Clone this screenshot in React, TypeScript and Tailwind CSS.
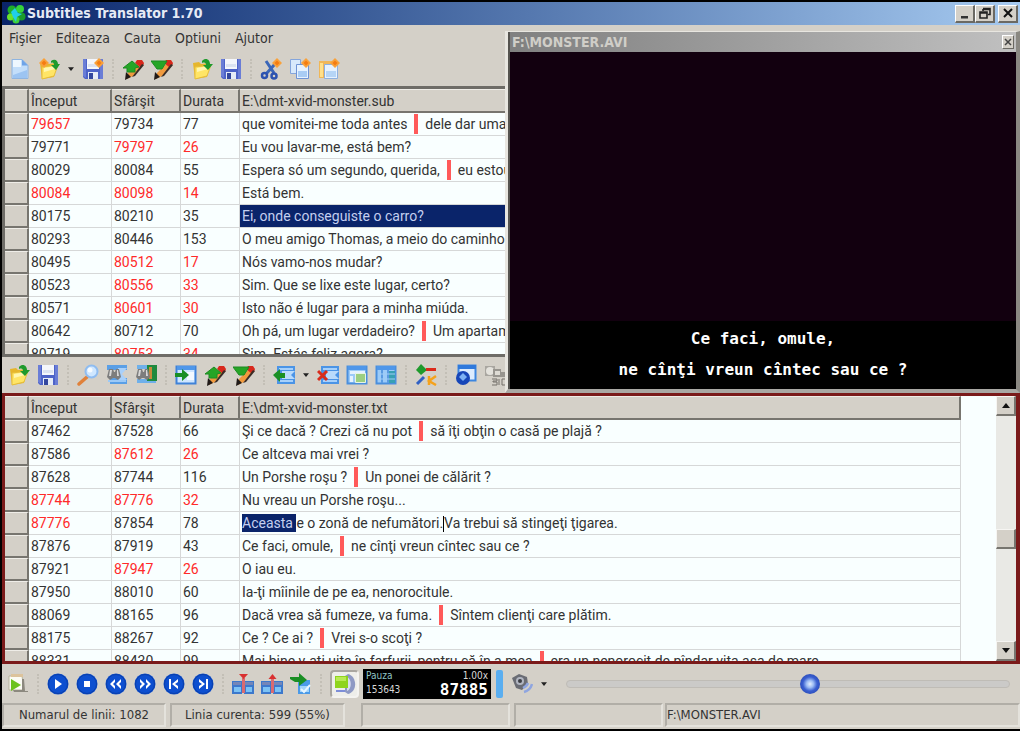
import { Fragment } from "react"
import type { ReactNode } from "react"
import clsx from "clsx"

interface Row {
  start: string
  end: string
  duration: string
  text: string[]
  redStart?: boolean
  redEnd?: boolean
  selected?: boolean
  editing?: boolean
}

const sourceRows: Row[] = [
  { start: "79657", end: "79734", duration: "77", text: ["que vomitei-me toda antes", "dele dar uma volta"], redStart: true },
  { start: "79771", end: "79797", duration: "26", text: ["Eu vou lavar-me, está bem?"], redEnd: true },
  { start: "80029", end: "80084", duration: "55", text: ["Espera só um segundo, querida,", "eu estou"] },
  { start: "80084", end: "80098", duration: "14", text: ["Está bem."], redStart: true, redEnd: true },
  { start: "80175", end: "80210", duration: "35", text: ["Ei, onde conseguiste o carro?"], selected: true },
  { start: "80293", end: "80446", duration: "153", text: ["O meu amigo Thomas, a meio do caminho", ""] },
  { start: "80495", end: "80512", duration: "17", text: ["Nós vamo-nos mudar?"], redEnd: true },
  { start: "80523", end: "80556", duration: "33", text: ["Sim. Que se lixe este lugar, certo?"], redEnd: true },
  { start: "80571", end: "80601", duration: "30", text: ["Isto não é lugar para a minha miúda."], redEnd: true },
  { start: "80642", end: "80712", duration: "70", text: ["Oh pá, um lugar verdadeiro?", "Um apartamento"] },
  { start: "80719", end: "80753", duration: "34", text: ["Sim. Estás feliz agora?"], redEnd: true },
]

const translatedRows: Row[] = [
  { start: "87462", end: "87528", duration: "66", text: ["Şi ce dacă ? Crezi că nu pot", "să îţi obţin o casă pe plajă ?"] },
  { start: "87586", end: "87612", duration: "26", text: ["Ce altceva mai vrei ?"], redEnd: true },
  { start: "87628", end: "87744", duration: "116", text: ["Un Porshe roşu ?", "Un ponei de călărit ?"] },
  { start: "87744", end: "87776", duration: "32", text: ["Nu vreau un Porshe roşu..."], redStart: true, redEnd: true },
  { start: "87776", end: "87854", duration: "78", text: ["Aceasta", "e o zonă de nefumători.", "Va trebui să stingeţi ţigarea."], redStart: true, editing: true },
  { start: "87876", end: "87919", duration: "43", text: ["Ce faci, omule,", "ne cînţi vreun cîntec sau ce ?"] },
  { start: "87921", end: "87947", duration: "26", text: ["O iau eu."], redEnd: true },
  { start: "87950", end: "88010", duration: "60", text: ["Ia-ţi mîinile de pe ea, nenorocitule."] },
  { start: "88069", end: "88165", duration: "96", text: ["Dacă vrea să fumeze, va fuma.", "Sîntem clienţi care plătim."] },
  { start: "88175", end: "88267", duration: "92", text: ["Ce ? Ce ai ?", "Vrei s-o scoţi ?"] },
  { start: "88331", end: "88430", duration: "99", text: ["Mai bine v-aţi uita în farfurii, pentru că în a mea", "era un nenorocit de pîndar vita asa de mare."] },
]

/* ---------- icons ---------- */

function Icon({ children }: { children: ReactNode }) {
  return (
    <svg viewBox="0 0 22 22" className="h-[22px] w-[22px] shrink-0" aria-hidden="true">
      {children}
    </svg>
  )
}

const Spark = ({ x = 17, y = 5 }: { x?: number; y?: number }) => (
  <g>
    <path d={`M${x} ${y - 5}l5 5-5 5-5-5z`} fill="#f9a13a" />
    <path d={`M${x} ${y - 2.5}l2.5 2.5-2.5 2.5-2.5-2.5z`} fill="#f47c12" />
  </g>
)

const NewIcon = () => (
  <Icon>
    <path d="M3 1.500h10l6 6v13H3z" fill="#c3defa" stroke="#8fb4e0" />
    <path d="M4 2h8v7H4z" fill="#eef7ff" />
    <path d="M13 1.500v6h6z" fill="#6fa4e8" />
    <path d="M4 17l14-5v8H4z" fill="#9cc4f2" />
  </Icon>
)

const FolderShape = () => (
  <g>
    <path d="M2 5l6-1 2 2 9-1-3 14-12 2z" fill="#e6b62c" />
    <path d="M4 9l16-2-4 11-12 3z" fill="#ffe566" stroke="#e6bd3a" />
    <path d="M6 10l12-2-1 3-11 3z" fill="#fff6b0" />
  </g>
)

const FolderIcon = () => (
  <Icon>
    <FolderShape />
    <path d="M11 3c4-4 8-1 8 3h3l-5 6-5-5h3c0-2-1-3-4-2z" fill="#1f9a2c" />
  </Icon>
)

const FolderNewIcon = () => (
  <Icon>
    <FolderShape />
    <path d="M13 3c4-3 7 0 7 3h2l-4 6-5-5h3c0-2-1-3-3-2z" fill="#1f9a2c" />
    <Spark x={6} y={5} />
  </Icon>
)

const DiskShape = () => (
  <g>
    <path d="M1 1h20v20H3l-2-2z" fill="#4d63c8" />
    <path d="M1 1h3v19l-3-2zM18 1h3v20h-3z" fill="#6a7dd6" />
    <path d="M5 1h12v10H5z" fill="#f4f6fb" />
    <path d="M6 6h10v3H6z" fill="#dbe2f1" />
    <path d="M6 14h10v7H6z" fill="#e6ecf7" />
    <path d="M7 15h4v6H7z" fill="#33479e" />
  </g>
)

const SaveIcon = () => (
  <Icon>
    <DiskShape />
  </Icon>
)

const SaveNewIcon = () => (
  <Icon>
    <DiskShape />
    <Spark />
  </Icon>
)

const PencilShape = () => (
  <g>
    <path d="M17 4l4 3-10 11-6 3 1-6z" fill="#f09a3e" />
    <path d="M15 2l5 0 2 3-1 3-3 1-5-4z" fill="#d8281c" />
    <path d="M20 6l2 1-9 11-3 1z" fill="#3a2c26" />
    <path d="M4 14l5 5-6 3z" fill="#201a18" />
  </g>
)

const PenUpIcon = () => (
  <Icon>
    <PencilShape />
    <path d="M10 3l7 6-4 1v4H5v-4H1z" fill="#26a526" stroke="#1c8a22" />
  </Icon>
)

const PenDownIcon = () => (
  <Icon>
    <PencilShape />
    <path d="M0 3h16l-5 8H6z" fill="#26a526" stroke="#1c8a22" />
  </Icon>
)

const CutIcon = () => (
  <Icon>
    <path d="M6 3l8 12M15 6L6 16" stroke="#3a66b8" strokeWidth="3" />
    <circle cx="4.500" cy="17.500" r="2.500" fill="none" stroke="#2b52b0" strokeWidth="2.500" />
    <circle cx="14" cy="18" r="2.500" fill="none" stroke="#2b52b0" strokeWidth="2.500" />
    <Spark />
  </Icon>
)

const CopyIcon = () => (
  <Icon>
    <path d="M1.500 1.500h10v14h-10z" fill="#d8e9fb" stroke="#84a5dc" />
    <path d="M7.500 6.500h12v14h-12z" fill="#e6f2ff" stroke="#6f93d4" />
    <path d="M9 13h9v6H9z" fill="#a9ccf4" />
    <Spark />
  </Icon>
)

const PasteIcon = () => (
  <Icon>
    <path d="M1 3h15v17H1z" fill="#f0b758" />
    <path d="M2 5h3v14H2z" fill="#ffe08a" />
    <path d="M6.500 6.500h13v14h-13z" fill="#e6f2ff" stroke="#8eb0df" />
    <path d="M8 13h10v6H8z" fill="#b6d5f6" />
    <Spark />
  </Icon>
)

const SearchIcon = () => (
  <Icon>
    <path d="M2 20l8-7" stroke="#e0813a" strokeWidth="3.500" strokeLinecap="round" />
    <circle cx="14.500" cy="7.500" r="6" fill="#cfe7ff" stroke="#8fbcf0" strokeWidth="2" />
    <circle cx="13" cy="6" r="2.500" fill="#f6fbff" />
  </Icon>
)

const Binoculars = () => (
  <g>
    <path d="M3 5h4l1 3h1l1-3h3l2 8-3 3-3-2-2 0-3 2-3-3z" fill="#7d7d7d" />
    <path d="M4 6h2l-1 6H3zM11 6h1l1 6h-2z" fill="#d8d8d8" />
  </g>
)

const FindRowIcon = () => (
  <Icon>
    <path d="M1 1h20v5H1zM4 14h17v6H4z" fill="#5a9fe6" />
    <path d="M12 4h9l-5 6 5 6h-9z" fill="#a9d0fa" />
    <path d="M2 16h18v2H2z" fill="#9bc9f7" />
    <Binoculars />
  </Icon>
)

const FindGridIcon = () => (
  <Icon>
    <path d="M2 1h12v4H2zM2 15h19v4H2z" fill="#6fb0ea" />
    <path d="M12 1h10v16H12z" fill="#1f8a3e" />
    <path d="M14 3h3v12h-3z" fill="#c58a3c" />
    <Binoculars />
  </Icon>
)

const InsertIcon = () => (
  <Icon>
    <path d="M1.500 2.500h19v17h-19z" fill="#cfe6ff" stroke="#3f82d8" strokeWidth="2" />
    <path d="M2 2h18v4H2z" fill="#4f97ea" />
    <path d="M12 8h7v8h-7z" fill="#f3f9ff" />
    <path d="M0 9h7V5l7 6-7 6v-4H0z" fill="#1a8f24" />
  </Icon>
)

const RowShape = () => (
  <g>
    <path d="M4 2h18v18H4z" fill="#4b94e6" />
    <path d="M6 4h14v2H6zM6 16h14v2H6z" fill="#a6d0fb" />
    <path d="M9 7h13l-4 4 4 4H9z" fill="#b9dafb" />
  </g>
)

const AddRowIcon = () => (
  <Icon>
    <RowShape />
    <path d="M0 11l7-6v4h5v5H7v4z" fill="#1a8f24" />
  </Icon>
)

const DeleteRowIcon = () => (
  <Icon>
    <RowShape />
    <path d="M1 7l9 9M10 7l-9 9" stroke="#d92c1c" strokeWidth="3" />
  </Icon>
)

const GridIcon = ({ teal }: { teal?: boolean }) => (
  <Icon>
    <path d="M1.500 2.500h19v17h-19z" fill="#9ccbf8" stroke="#4a8fdd" strokeWidth="2" />
    <path d="M2 2h18v4H2z" fill="#4f97ea" />
    {teal ? (
      <>
        <path d="M14 7h6v12h-6z" fill="#38a0b4" />
        <path d="M7 6v13M13 6v13" stroke="#5a9be2" strokeWidth="2" />
        <path d="M3 10h17M3 15h17" stroke="#9fcdf6" />
      </>
    ) : (
      <>
        <path d="M4 7h15v3H4zM4 12h3v6H4z" fill="#e4f2ff" />
        <path d="M9.500 9.500h10v9h-10z" fill="#9ccf82" stroke="#e8f4e4" />
      </>
    )}
  </Icon>
)

const OptionsIcon = () => (
  <Icon>
    <path d="M6 0l6 6-6 5-5-5z" fill="#1f9a2c" />
    <path d="M11 4h10v3H11z" fill="#dc2a1a" />
    <path d="M2 20l7-7" stroke="#3161c4" strokeWidth="3" />
    <path d="M14 12v9M21 12l-7 5 7 4" fill="none" stroke="#f5a21c" strokeWidth="2.500" />
  </Icon>
)

const WebIcon = () => (
  <Icon>
    <path d="M3.500 1.500h17v15h-17z" fill="#dcecff" stroke="#3c86e0" strokeWidth="2" />
    <path d="M3 1h18v4H3z" fill="#2f79dc" />
    <circle cx="8" cy="14" r="7" fill="#1746b8" />
    <path d="M4 13l4-4 4 4-4 4z" fill="#7db1f4" />
  </Icon>
)

const DisabledIcon = () => (
  <Icon>
    <path d="M1 2h10v10H1z" fill="#a9a6a0" />
    <circle cx="6" cy="7" r="4" fill="#e4e2dc" />
    <path d="M9 5h8v3h4v5H9z" fill="#98958f" />
    <path d="M11 7h5v4h-5z" fill="#dedbd4" />
    <path d="M8 15h5v2H9v1h4v3H8M15 15v6M18 15h4v6h-4z" fill="none" stroke="#74716b" />
  </Icon>
)

const ScriptIcon = () => (
  <Icon>
    <path d="M2 3h13l2 14H2z" fill="#fbfbf4" stroke="#b9b59e" />
    <path d="M4 1h12v3H4z" fill="#dcc39c" />
    <path d="M15 6h2l1 12 3 0v1H7l-1-2h9z" fill="#8c897f" />
    <path d="M4 6l10 6-10 6z" fill="#6cc21c" />
  </Icon>
)

const MediaIcon = ({ d }: { d: string }) => (
  <Icon>
    <circle cx="11" cy="11" r="10.500" fill="#0d4fd0" />
    <circle cx="11" cy="11" r="9.500" fill="none" stroke="#0a3ea8" />
    <path d={d} fill="#fff" />
  </Icon>
)

const SyncIcon = ({ up }: { up?: boolean }) => (
  <Icon>
    <path d="M0 8h10v13H0zM12 8h10v13H12z" fill="#3c78cc" />
    <path d="M2 14h7v5H2zM14 14h6v5h-6z" fill="#7cc2f4" />
    <path d="M1 9h8v3H1zM13 9h8v3h-8z" fill="#7486b8" />
    <path d="M10 5h3v15h-3z" fill="#d96a70" />
    <path d={up ? "M11.500 1l4 5h-8z" : "M7 1h9l-4.500 5z"} fill="#d93030" />
  </Icon>
)

const MoveToIcon = () => (
  <Icon>
    <path d="M8 7h12v14H8z" fill="#4a9ae8" />
    <path d="M10 13h9v6h-9z" fill="#a2d4fb" />
    <path d="M11 16l3 3 6-7" fill="none" stroke="#e6f5ff" strokeWidth="2" />
    <path d="M0 4h9V0l8 7-8 6V9H5L0 6z" fill="#1a8f24" />
  </Icon>
)

const CameraIcon = () => (
  <Icon>
    <path d="M14 1c9 2 10 18 0 20l-3-2V3z" fill="#8e99c4" />
    <path d="M13 4c5 2 5 12 0 14z" fill="#d9deef" />
    <path d="M1 3h13v12H1z" fill="#8fd41e" />
    <path d="M2 4h10v4H2z" fill="#b9ea55" />
    <path d="M2 18h9" stroke="#7d8ed8" strokeWidth="2" />
  </Icon>
)

const SpeakerIcon = () => (
  <Icon>
    <path d="M1 5l7-4 8 3 1 7-6 6-6-2z" fill="#6a6c74" />
    <circle cx="9" cy="8" r="4" fill="#b2b6c2" />
    <circle cx="9" cy="8" r="2" fill="#3c3e44" />
    <path d="M13 19c4-1 7-4 8-8M12 15c2-1 4-2 5-5" fill="none" stroke="#8fa5e0" strokeWidth="2.500" />
  </Icon>
)

const AppLogo = () => (
  <svg viewBox="0 0 20 20" className="h-5 w-5 shrink-0" aria-hidden="true">
    <circle cx="6" cy="6" r="4.500" fill="#1fae2a" />
    <circle cx="14" cy="5" r="4" fill="#36d43a" />
    <circle cx="4.500" cy="13" r="3.500" fill="#6be02c" />
    <circle cx="15.500" cy="12.500" r="4" fill="#1b9c2c" />
    <circle cx="10" cy="16" r="3.500" fill="#3fcf3a" />
    <path d="M5 8l4-4 3 5 4 1-5 3-1 5-3-5z" fill="#20cfe8" />
  </svg>
)

/* ---------- toolbar parts ---------- */

function ToolButton({ label, children }: { label: string; children: ReactNode }) {
  return (
    <button type="button" aria-label={label} className="flex h-7 w-[29px] shrink-0 items-center justify-center">
      {children}
    </button>
  )
}

function DropArrow({ label }: { label: string }) {
  return (
    <button type="button" aria-label={label} className="flex h-7 w-[15px] shrink-0 items-center justify-center">
      <svg viewBox="0 0 8 5" className="h-1 w-1.5" aria-hidden="true">
        <path d="M0 0h8L4 5z" fill="#222" />
      </svg>
    </button>
  )
}

function Separator() {
  return (
    <div className="flex w-[11px] shrink-0 justify-center">
      <div className="h-5 border-l-2 border-dotted border-[#c3bfb6]" />
    </div>
  )
}

/* ---------- subtitle grid ---------- */

function CellText({ row }: { row: Row }) {
  if (row.editing) {
    return (
      <>
        <span className="bg-[#0a246a] py-px text-[#c4cff0]">{row.text[0]} </span>
        {row.text[1]}
        <span className="inline-block h-4 w-px bg-black align-middle" />
        {row.text[2]}
      </>
    )
  }
  return (
    <>
      {row.text.map((part, i) => (
        <Fragment key={i}>
          {i > 0 && <span className="mx-[7px] mt-px inline-block h-5 w-1 bg-[#ff5a5a] align-top" />}
          {part}
        </Fragment>
      ))}
    </>
  )
}

function SubtitleTable({ file, rows }: { file: string; rows: Row[] }) {
  const head = "h-6 border-r-2 border-b-2 border-[#77756f] border-t border-t-[#efede8] bg-[#d4d0c8] p-0 pl-0.5 text-left font-normal leading-5"
  const cell = "h-[23px] border-r border-b border-[#d6d8d8] p-0 pl-0.5 leading-[22px]"
  const red = "text-[#ff2a2a]"
  return (
    <table className="w-[956px] table-fixed border-separate border-spacing-0 font-[Roboto,'Liberation_Sans',sans-serif] text-[14px] whitespace-nowrap text-[#333]">
      <colgroup>
        <col className="w-[24px]" />
        <col className="w-[83px]" />
        <col className="w-[69px]" />
        <col className="w-[59px]" />
        <col />
      </colgroup>
      <thead>
        <tr>
          <th className={head} aria-label="Rand" />
          <th className={head}>Început</th>
          <th className={head}>Sfârşit</th>
          <th className={head}>Durata</th>
          <th className={head}>{file}</th>
        </tr>
      </thead>
      <tbody>
        {rows.map((row) => (
          <tr key={row.start + row.end}>
            <td className="h-[23px] border-r-2 border-b-2 border-[#77756f] border-t border-t-[#efede8] bg-[#d4d0c8] p-0" />
            <td className={clsx(cell, row.redStart && red)}>{row.start}</td>
            <td className={clsx(cell, row.redEnd && red)}>{row.end}</td>
            <td className={clsx(cell, row.redEnd && red)}>{row.duration}</td>
            <td className={clsx(cell, "overflow-hidden", row.selected && "bg-[#0a246a] text-[#c4cff0]")}>
              <CellText row={row} />
            </td>
          </tr>
        ))}
      </tbody>
    </table>
  )
}

function ScrollBar() {
  const button = "flex h-5 w-full shrink-0 items-center justify-center border border-r-2 border-b-2 border-[#f6f5f2] border-r-[#77756f] border-b-[#77756f] bg-[#d4d0c8]"
  return (
    <div className="flex w-5 shrink-0 flex-col bg-[#e9e9e5]">
      <button type="button" aria-label="Sus" className={button}>
        <svg viewBox="0 0 8 5" className="h-[5px] w-2" aria-hidden="true">
          <path d="M0 5h8L4 0z" fill="#111" />
        </svg>
      </button>
      <div className="grow-[55]" />
      <div className={button} />
      <div className="grow-[45]" />
      <button type="button" aria-label="Jos" className={button}>
        <svg viewBox="0 0 8 5" className="h-[5px] w-2" aria-hidden="true">
          <path d="M0 0h8L4 5z" fill="#111" />
        </svg>
      </button>
    </div>
  )
}

/* ---------- window parts ---------- */

function TitleBar() {
  const button = "flex h-[18px] w-5 items-center justify-center border border-r-2 border-b-2 border-white border-r-[#6b6963] border-b-[#6b6963] bg-[#d4d0c8]"
  return (
    <header className="flex h-[23px] shrink-0 items-center bg-linear-to-r from-[#0a246a] to-[#a6caf0] pr-0.5 pl-1">
      <AppLogo />
      <h1 className="ml-px grow font-['DejaVu_Sans_Condensed','DejaVu_Sans',sans-serif] text-[14px] font-bold text-[#e6ebf6]">
        Subtitles Translator 1.70
      </h1>
      <button type="button" aria-label="Minimizare" className={button}>
        <svg viewBox="0 0 12 12" className="h-3 w-3" aria-hidden="true">
          <path d="M2 9h7v2.500H2z" fill="#333" />
        </svg>
      </button>
      <button type="button" aria-label="Restaurare" className={button}>
        <svg viewBox="0 0 12 12" className="h-3 w-3" aria-hidden="true">
          <path d="M4 1.500h7v6H9M4 2v2M1 5h7v6H1zM1 6h7M4 2.500h7" fill="none" stroke="#222" strokeWidth="1.600" />
        </svg>
      </button>
      <button type="button" aria-label="Inchidere" className={clsx(button, "ml-[3px]")}>
        <svg viewBox="0 0 12 12" className="h-3 w-3" aria-hidden="true">
          <path d="M2 2l8 8M10 2l-8 8" stroke="#111" strokeWidth="2" />
        </svg>
      </button>
    </header>
  )
}

function MenuBar() {
  return (
    <nav className="flex h-[26px] shrink-0 items-center gap-3.5 pl-[7px] font-['DejaVu_Sans_Condensed','DejaVu_Sans',sans-serif] text-[14px] text-[#333]">
      {["Fişier", "Editeaza", "Cauta", "Optiuni", "Ajutor"].map((item) => (
        <button key={item} type="button">
          {item}
        </button>
      ))}
    </nav>
  )
}

function VideoWindow() {
  return (
    <section className="mt-1.5 flex flex-col border-t border-r-4 border-b-4 border-l-[3px] border-[#e8e6e0] border-r-[#8a8882] border-b-[#a9a8a4] bg-[#55534f] pl-0.5">
      <div className="flex h-5 shrink-0 items-center bg-linear-to-r from-[#808080] to-[#c0c0c0] pr-0.5">
        <h2 className="grow pl-0.5 font-['DejaVu_Sans_Condensed','DejaVu_Sans',sans-serif] text-[14px] leading-5 font-bold text-[#d0cec8]">
          F:\MONSTER.AVI
        </h2>
        <button
          type="button"
          aria-label="Inchide video"
          className="flex h-3.5 w-3 items-center justify-center border border-white border-r-[#6b6963] border-b-[#6b6963] bg-[#d4d0c8]"
        >
          <svg viewBox="0 0 8 8" className="h-2 w-2" aria-hidden="true">
            <path d="M1 1l6 6M7 1L1 7" stroke="#444" strokeWidth="1.500" />
          </svg>
        </button>
      </div>
      <div className="grow bg-[#12000f]" />
      <p className="h-[68px] shrink-0 bg-black pt-0.5 text-center font-['DejaVu_Sans_Mono',monospace] text-[16px] leading-[31px] font-bold text-white">
        Ce faci, omule,
        <br />
        ne cînţi vreun cîntec sau ce ?
      </p>
    </section>
  )
}

function PlayerBar() {
  return (
    <div className="flex h-[39px] shrink-0 items-center pl-px">
      <ToolButton label="Ruleaza scriptul"><ScriptIcon /></ToolButton>
      <Separator />
      <ToolButton label="Redare"><MediaIcon d="M8 6l7 5-7 5z" /></ToolButton>
      <ToolButton label="Stop"><MediaIcon d="M8 8h6v6H8z" /></ToolButton>
      <ToolButton label="Inapoi"><MediaIcon d="M10 6v3l-2 2 2 2v3l-5-5zM16 6v3l-2 2 2 2v3l-5-5z" /></ToolButton>
      <ToolButton label="Inainte"><MediaIcon d="M6 6v3l2 2-2 2v3l5-5zM12 6v3l2 2-2 2v3l5-5z" /></ToolButton>
      <ToolButton label="Anterior"><MediaIcon d="M6 6h2v10H6zM15 6v3l-3 2 3 2v3l-6-5z" /></ToolButton>
      <ToolButton label="Urmator"><MediaIcon d="M14 6h2v10h-2zM7 6v3l3 2-3 2v3l6-5z" /></ToolButton>
      <Separator />
      <ToolButton label="Seteaza inceputul"><SyncIcon /></ToolButton>
      <ToolButton label="Seteaza sfarsitul"><SyncIcon up /></ToolButton>
      <ToolButton label="Muta la cadru"><MoveToIcon /></ToolButton>
      <Separator />
      <button
        type="button"
        aria-label="Sincronizare video"
        className="ml-1 flex h-7 w-[29px] shrink-0 items-center justify-center rounded border-2 border-[#f4f3f0] border-t-[#a9a6a0] border-l-[#a9a6a0] bg-[#eeeeea]"
      >
        <CameraIcon />
      </button>
      <div className="ml-1 flex h-[30px] w-[128px] shrink-0 flex-col justify-center bg-black px-[3px] font-['DejaVu_Sans_Condensed','DejaVu_Sans',sans-serif] text-[10px] leading-3 text-[#d8d8d8]">
        <div className="flex justify-between">
          <span className="text-[#8fc4c4]">Pauza</span>
          <span>1.00x</span>
        </div>
        <div className="flex items-center justify-between">
          <span>153643</span>
          <span className="font-['DejaVu_Sans_Mono',monospace] text-[16px] leading-4 font-bold text-white">87885</span>
        </div>
      </div>
      <div className="ml-[5px] h-7 w-[7px] shrink-0 rounded-xs bg-[#5aaef0]" />
      <div className="ml-1 flex shrink-0 items-center">
        <ToolButton label="Volum"><SpeakerIcon /></ToolButton>
        <DropArrow label="Optiuni volum" />
      </div>
      <input
        type="range"
        aria-label="Pozitie"
        min={1}
        max={1082}
        defaultValue={599}
        className="mr-2.5 ml-[15px] h-2 min-w-0 grow appearance-none rounded-full border border-[#bfbcb6] bg-[#cbcac8] [&::-webkit-slider-thumb]:h-5 [&::-webkit-slider-thumb]:w-5 [&::-webkit-slider-thumb]:appearance-none [&::-webkit-slider-thumb]:rounded-full [&::-webkit-slider-thumb]:bg-[radial-gradient(circle,#e4eeff_0%,#9cbcf4_25%,#3a5fd0_50%,#1c3ba4_100%)]"
      />
    </div>
  )
}

function StatusBar() {
  const panel = "flex h-6 shrink-0 items-center border-2 border-[#e4e2dc] border-t-[#b1aea7] border-l-[#b1aea7]"
  return (
    <footer className="flex h-[26px] shrink-0 items-start font-['DejaVu_Sans_Condensed','DejaVu_Sans',sans-serif] text-[13px] whitespace-nowrap text-[#333]">
      <div className={clsx(panel, "w-[164px] justify-center")}>Numarul de linii: 1082</div>
      <div className={clsx(panel, "ml-1 w-[175px] justify-center")}>Linia curenta: 599 (55%)</div>
      <div className={clsx(panel, "ml-4 w-[149px]")} />
      <div className={clsx(panel, "ml-1 w-[149px]")} />
      <div className={clsx(panel, "ml-0.5 grow")}>F:\MONSTER.AVI</div>
    </footer>
  )
}

export default function App() {
  return (
    <div className="flex h-screen flex-col overflow-hidden border-y-2 border-l-2 border-black bg-[#d4d0c8]">
      <TitleBar />
      <div className="grid shrink-0 grid-cols-[503px_1fr]">
        <div className="flex min-w-0 flex-col overflow-hidden">
          <MenuBar />
          <div className="flex h-[35px] shrink-0 items-center pl-[3px]">
            <ToolButton label="Nou"><NewIcon /></ToolButton>
            <ToolButton label="Deschide original"><FolderNewIcon /></ToolButton>
            <DropArrow label="Fisiere recente" />
            <ToolButton label="Salveaza ca"><SaveNewIcon /></ToolButton>
            <Separator />
            <ToolButton label="Editeaza sus"><PenUpIcon /></ToolButton>
            <ToolButton label="Editeaza jos"><PenDownIcon /></ToolButton>
            <Separator />
            <ToolButton label="Deschide"><FolderIcon /></ToolButton>
            <ToolButton label="Salveaza"><SaveIcon /></ToolButton>
            <Separator />
            <ToolButton label="Taie"><CutIcon /></ToolButton>
            <ToolButton label="Copiaza"><CopyIcon /></ToolButton>
            <ToolButton label="Lipeste"><PasteIcon /></ToolButton>
          </div>
          <div className="h-[271px] overflow-hidden border-y-[3px] border-l-[3px] border-[#6e6c67] bg-[#f9ffff]">
            <SubtitleTable file="E:\dmt-xvid-monster.sub" rows={sourceRows} />
          </div>
          <div className="flex h-9 shrink-0 items-center pl-0.5">
            <ToolButton label="Deschide traducerea"><FolderIcon /></ToolButton>
            <ToolButton label="Salveaza traducerea"><SaveIcon /></ToolButton>
            <Separator />
            <ToolButton label="Cauta"><SearchIcon /></ToolButton>
            <ToolButton label="Cauta in linie"><FindRowIcon /></ToolButton>
            <ToolButton label="Cauta in tabel"><FindGridIcon /></ToolButton>
            <Separator />
            <ToolButton label="Insereaza"><InsertIcon /></ToolButton>
            <ToolButton label="Muta sus"><PenUpIcon /></ToolButton>
            <ToolButton label="Muta jos"><PenDownIcon /></ToolButton>
            <Separator />
            <ToolButton label="Adauga linie"><AddRowIcon /></ToolButton>
            <DropArrow label="Optiuni linie" />
            <ToolButton label="Sterge linie"><DeleteRowIcon /></ToolButton>
            <ToolButton label="Uneste linii"><GridIcon /></ToolButton>
            <ToolButton label="Imparte linii"><GridIcon teal /></ToolButton>
            <Separator />
            <ToolButton label="Corectii"><OptionsIcon /></ToolButton>
            <Separator />
            <ToolButton label="Internet"><WebIcon /></ToolButton>
            <ToolButton label="Conversie"><DisabledIcon /></ToolButton>
          </div>
        </div>
        <VideoWindow />
      </div>
      <main className="flex min-h-0 grow overflow-hidden border-[3px] border-r-4 border-[#7a1a1a] bg-[#f9ffff]">
        <div className="min-w-0 grow overflow-hidden">
          <SubtitleTable file="E:\dmt-xvid-monster.txt" rows={translatedRows} />
        </div>
        <ScrollBar />
      </main>
      <PlayerBar />
      <StatusBar />
    </div>
  )
}
